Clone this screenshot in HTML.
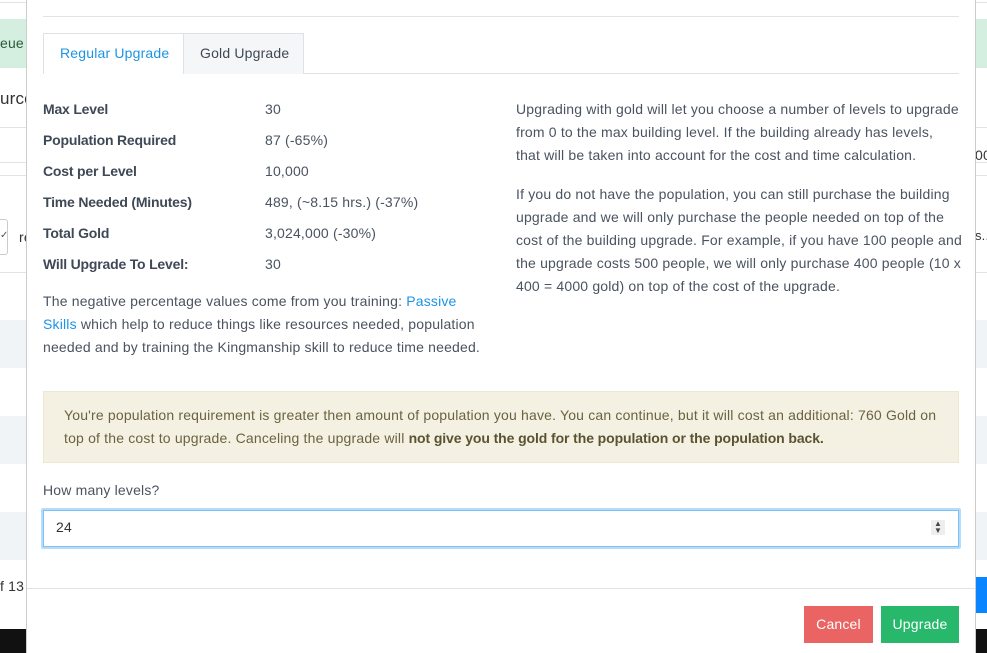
<!DOCTYPE html>
<html><head><style>
*{margin:0;padding:0;box-sizing:border-box}
body{width:987px;height:653px;overflow:hidden;background:#fff;font-family:"Liberation Sans",sans-serif;font-size:14px;color:#4a5360;position:relative;letter-spacing:0.18px}
.a{position:absolute;white-space:nowrap}
.b{font-weight:bold;color:#3f4856;letter-spacing:-0.2px}
</style></head><body>
<div class="a" style="left:0;top:2px;width:987px;height:1px;background:#e3e3e3"></div>
<div class="a" style="left:0;top:19px;width:987px;height:49px;background:#d4eedf"></div>
<div class="a" style="left:0;top:35px;font-size:14px;color:#2a5b3a">eue (</div>
<div class="a" style="left:0;top:89px;font-size:17px;color:#333">urce</div>
<div class="a" style="left:0;top:127px;width:987px;height:1px;background:#e3e3e3"></div>
<div class="a" style="left:975px;top:147px;font-size:14px;color:#333">00</div>
<div class="a" style="left:0;top:162px;width:987px;height:1px;background:#e3e3e3"></div>
<div class="a" style="left:0;top:175px;width:987px;height:1px;background:#e3e3e3"></div>
<div class="a" style="left:-10px;top:219px;width:18px;height:36px;border:1px solid #ccc;border-radius:3px"></div>
<div class="a" style="left:0;top:230px;font-size:10px;color:#555">✓</div>
<div class="a" style="left:19px;top:229px;color:#333">re</div>
<div class="a" style="left:975px;top:228px;color:#333;font-size:13px">s...</div>
<div class="a" style="left:0;top:272px;width:987px;height:1px;background:#e3e3e3"></div>
<div class="a" style="left:0;top:320px;width:987px;height:48px;background:#f1f4f7"></div>
<div class="a" style="left:0;top:416px;width:987px;height:48px;background:#f1f4f7"></div>
<div class="a" style="left:0;top:512px;width:987px;height:48px;background:#f1f4f7"></div>
<div class="a" style="left:0;top:578px;color:#333">f 13</div>
<div class="a" style="left:975px;top:577px;width:12px;height:36px;background:#0a84ff"></div>
<div class="a" style="left:0;top:629px;width:987px;height:24px;background:#111"></div>
<div class="a" style="left:26px;top:0;width:950px;height:653px;background:#fff;border-left:1px solid #ccc;border-right:1px solid #ccc"></div>
<div class="a" style="left:43px;top:16px;width:916px;height:1px;background:#e1e3e6"></div>
<div class="a" style="left:43px;top:73px;width:916px;height:1px;background:#dee2e6"></div>
<div class="a" style="left:43px;top:33px;width:141px;height:41px;border:1px solid #dee2e6;border-bottom:none;background:#fff;color:#1a95e6;padding:11px 0 0 16px">Regular Upgrade</div>
<div class="a" style="left:183px;top:33px;width:121px;height:41px;border:1px solid #dee2e6;border-bottom:none;background:#f5f6f8;color:#3f4856;padding:11px 0 0 16px">Gold Upgrade</div>

<div class="a b" style="left:43px;top:101px">Max Level</div><div class="a" style="left:265px;top:101px">30</div>
<div class="a b" style="left:43px;top:132px">Population Required</div><div class="a" style="left:265px;top:132px">87 (-65%)</div>
<div class="a b" style="left:43px;top:163px">Cost per Level</div><div class="a" style="left:265px;top:163px">10,000</div>
<div class="a b" style="left:43px;top:194px">Time Needed (Minutes)</div><div class="a" style="left:265px;top:194px">489, (~8.15 hrs.) (-37%)</div>
<div class="a b" style="left:43px;top:225px">Total Gold</div><div class="a" style="left:265px;top:225px">3,024,000 (-30%)</div>
<div class="a b" style="left:43px;top:256px">Will Upgrade To Level:</div><div class="a" style="left:265px;top:256px">30</div>
<div class="a" style="left:43px;top:290px;line-height:23px">The negative percentage values come from you training: <span style="color:#1a95e6">Passive</span><br><span style="color:#1a95e6">Skills</span> which help to reduce things like resources needed, population<br>needed and by training the Kingmanship skill to reduce time needed.</div>

<div class="a" style="left:516px;top:98px;line-height:23px">Upgrading with gold will let you choose a number of levels to upgrade<br>from 0 to the max building level. If the building already has levels,<br>that will be taken into account for the cost and time calculation.</div>
<div class="a" style="left:516px;top:183px;line-height:23px">If you do not have the population, you can still purchase the building<br>upgrade and we will only purchase the people needed on top of the<br>cost of the building upgrade. For example, if you have 100 people and<br>the upgrade costs 500 people, we will only purchase 400 people (10 x<br>400 = 4000 gold) on top of the cost of the upgrade.</div>

<div class="a" style="left:43px;top:391px;width:916px;height:72px;background:#f4f1e2;border:1px solid #ede8d2"></div>
<div class="a" style="left:64px;top:404px;line-height:23px;color:#6a6240">You're population requirement is greater then amount of population you have. You can continue, but it will cost an additional: 760 Gold on<br>top of the cost to upgrade. Canceling the upgrade will <b style="color:#5a5230;letter-spacing:-0.1px">not give you the gold for the population or the population back.</b></div>

<div class="a" style="left:43px;top:482px">How many levels?</div>
<div class="a" style="left:41px;top:508px;width:920px;height:41px;background:#b6dcfb;border-radius:2px"></div>
<div class="a" style="left:43px;top:510px;width:916px;height:37px;background:#fff;border:1px solid #7cc1f5"></div>
<div class="a" style="left:56px;top:519px;color:#333">24</div>
<div class="a" style="left:931px;top:520px;width:14px;height:15px;background:#eee;color:#444;font-size:8px;line-height:7px;text-align:center">▲<br>▼</div>

<div class="a" style="left:27px;top:588px;width:948px;height:1px;background:#e1e3e6"></div>
<div class="a" style="left:804px;top:606px;width:69px;height:37px;background:#e96463;color:#fff;text-align:center;line-height:37px">Cancel</div>
<div class="a" style="left:881px;top:606px;width:78px;height:37px;background:#27b86b;color:#fff;text-align:center;line-height:37px">Upgrade</div>
</body></html>
